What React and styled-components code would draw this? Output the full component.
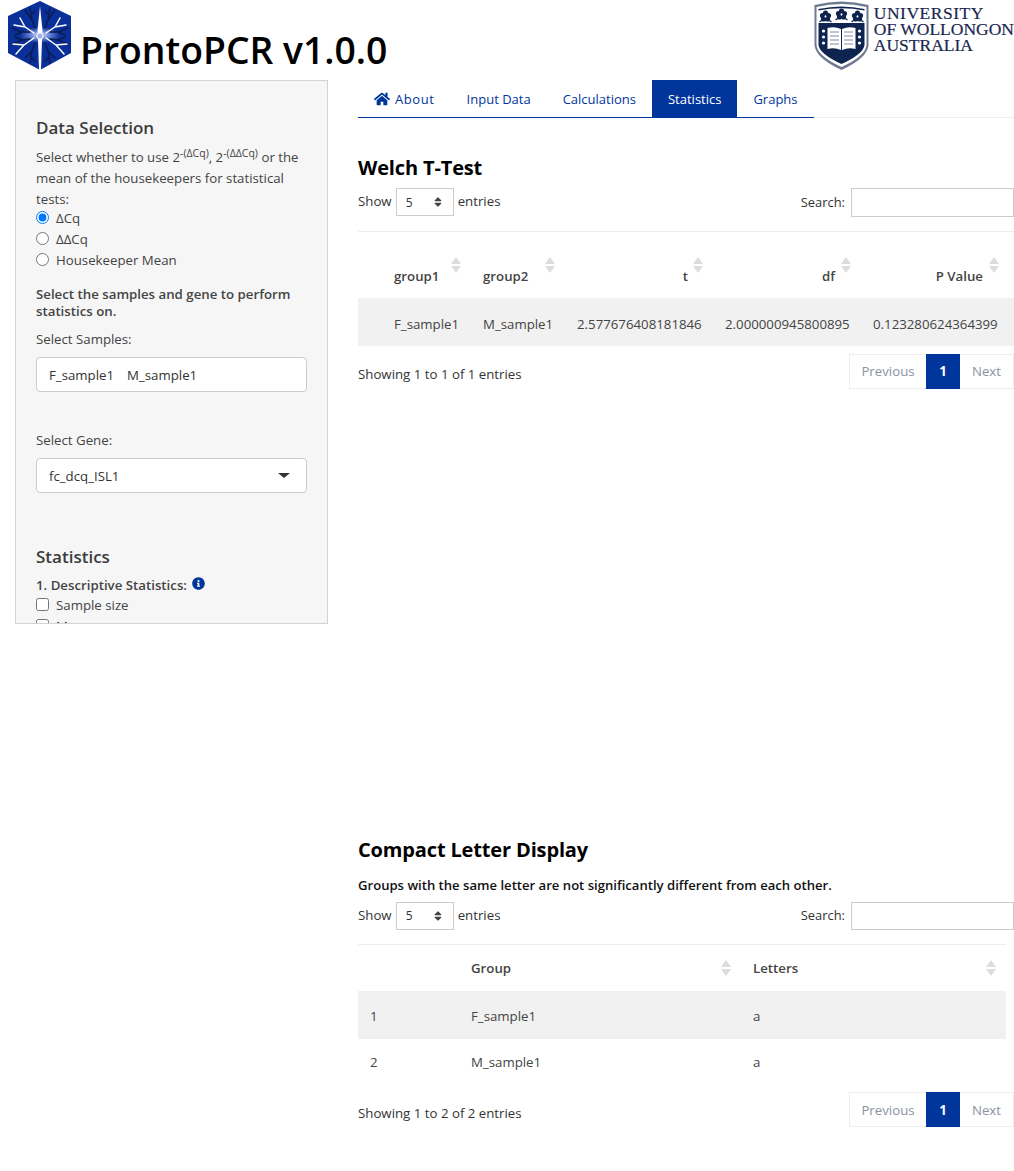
import React from "react"
import styled, { createGlobalStyle } from "styled-components"
import { FaHome, FaInfoCircle, FaSort } from "react-icons/fa"

const BLUE = "#00359c"
const FONT = `"Open Sans", "Noto Sans", sans-serif`

const GlobalStyle = createGlobalStyle`
  html, body {
    margin: 0;
    padding: 0;
    background: #fff;
    font-family: ${FONT};
    font-size: 13.25px;
    color: #444;
  }
  * { box-sizing: border-box; }
`

const Page = styled.div`
  width: 1014px;
  height: 1171px;
  overflow: hidden;
`

const Header = styled.header`
  display: flex;
  align-items: flex-start;
  height: 80px;
  padding-left: 8px;
`

const Title = styled.h1`
  margin: 27px 0 0 8px;
  font-size: 37.3px;
  line-height: 45px;
  font-weight: 600;
  color: #000;
  flex: 1;
`

const UowLogo = styled.div`
  display: flex;
  align-items: flex-start;
  gap: 5px;
  padding-top: 1px;
`

const UowText = styled.div`
  display: flex;
  flex-direction: column;
  padding-top: 4px;
  font-family: "Liberation Serif", serif;
  font-size: 17.5px;
  line-height: 16px;
  color: #1a2750;
  -webkit-text-stroke: 0.2px #1a2750;
  white-space: nowrap;
`

const UowLine = styled.span`
  letter-spacing: ${({ $spacing }) => $spacing ?? 0}px;
`

const Columns = styled.div`
  display: flex;
  align-items: flex-start;
  padding-left: 15px;
`

const Sidebar = styled.aside`
  flex: 0 0 313px;
  height: 544px;
  overflow: hidden;
  padding: 37px 20px 0;
  background: #f6f6f6;
  border: 1px solid #d4d4d4;
`

const SideHeading = styled.h3`
  margin: 0 0 9px;
  font-size: 17px;
  line-height: 20px;
  font-weight: 600;
  color: #3c3c3c;
`

const Para = styled.div`
  margin-bottom: -3px;
  line-height: 21px;
  sup { font-size: 10.5px; line-height: 0; }
`

const OptionRow = styled.label`
  display: flex;
  align-items: center;
  height: 21px;
  gap: 7px;
  input { margin: 0; width: 13px; height: 13px; }
`

const BoldPara = styled.div`
  margin-top: 16px;
  font-weight: 600;
  line-height: 17px;
`

const FieldLabel = styled.div`
  margin-top: ${({ $top }) => $top}px;
  line-height: 21px;
`

const FieldBox = styled.div`
  position: relative;
  display: flex;
  align-items: center;
  gap: 13px;
  height: 35px;
  margin-top: 7px;
  padding: 0 12px;
  background: #fff;
  border: 1px solid #ccc;
  border-radius: 4px;
  color: #333;
`

const Caret = styled.span`
  position: absolute;
  right: 16px;
  top: 14px;
  border: 5px solid transparent;
  border-top-color: #333;
  border-bottom: 0;
  border-left-width: 6px;
  border-right-width: 6px;
`

const StatHeading = styled(SideHeading)`
  margin: 54px 0 8px;
`

const StatLabel = styled.div`
  display: flex;
  align-items: center;
  gap: 5px;
  height: 19px;
  font-weight: 600;
  svg { color: ${BLUE}; font-size: 13px; margin-top: -2px; }
`

const Main = styled.main`
  flex: 0 0 656px;
  margin-left: 30px;
`

const TabBar = styled.nav`
  display: flex;
  height: 38px;
  border-bottom: 1px solid #eee;
`

const TabList = styled.div`
  display: flex;
  height: 38px;
  border-bottom: 1px solid ${BLUE};
`

const Tab = styled.a`
  display: flex;
  align-items: center;
  gap: 5px;
  height: 37px;
  padding: 0 16px;
  font-size: 13px;
  letter-spacing: ${({ $spacing }) => $spacing ?? 0}px;
  color: ${({ $active }) => ($active ? "#fff" : BLUE)};
  background: ${({ $active }) => ($active ? BLUE : "transparent")};
  svg { font-size: 16px; }
`

const Section = styled.section`
  margin-top: ${({ $top }) => $top}px;
`

const SectionTitle = styled.h3`
  margin: 0;
  font-size: 20px;
  line-height: 26px;
  font-weight: 700;
  letter-spacing: -0.15px;
  color: #000;
`

const Note = styled.p`
  margin: 13px 0 0;
  font-size: 13.1px;
  line-height: 18px;
  font-weight: 600;
  color: #111;
`

const Controls = styled.div`
  display: flex;
  justify-content: space-between;
  align-items: flex-start;
  margin-top: ${({ $top }) => $top}px;
  height: 29px;
  color: #333;
`

const ShowGroup = styled.div`
  display: flex;
  align-items: center;
  gap: 4px;
  height: 28px;
`

const ControlText = styled.span`
  margin-bottom: 2px;
`

const EntrySelect = styled.div`
  display: flex;
  align-items: center;
  justify-content: space-between;
  width: 58px;
  height: 28px;
  padding: 0 9px;
  border: 1px solid #ccc;
  font-size: 12px;
  svg { font-size: 12px; color: #444; }
`

const SearchGroup = styled.div`
  display: flex;
  align-items: center;
  gap: 6px;
  font-size: 12.9px;
`

const SearchInput = styled.input`
  width: 163px;
  height: ${({ $h }) => $h}px;
  border: 1px solid #ccc;
  background: #fff;
  padding: 0 4px;
`

const Table = styled.table`
  table-layout: fixed;
  width: ${({ $width }) => $width}px;
  border-collapse: collapse;
  border-top: 1px solid #eee;
  margin-top: ${({ $top }) => $top}px;
`

const Col = styled.col`
  width: ${({ $w }) => $w}px;
`

const Th = styled.th`
  position: relative;
  height: ${({ $h }) => $h}px;
  padding: ${({ $pad }) => $pad ?? "0 26px 0 12px"};
  text-align: ${({ $right }) => ($right ? "right" : "left")};
  font-weight: 600;
  color: #444;
  vertical-align: middle;
`

const Td = styled.td`
  height: ${({ $h }) => $h}px;
  padding: ${({ $pad }) => $pad ?? "0 12px"};
  text-align: ${({ $right }) => ($right ? "right" : "left")};
  white-space: nowrap;
  color: #444;
`

const Row = styled.tr`
  background: ${({ $shade }) => ($shade ? "#f1f1f1" : "transparent")};
`

const Sort = styled.span`
  position: absolute;
  right: ${({ $right }) => $right ?? 10}px;
  top: ${({ $top }) => $top}px;
  display: flex;
  flex-direction: column;
  gap: 2px;
  &::before, &::after {
    content: "";
    border-left: 5px solid transparent;
    border-right: 5px solid transparent;
  }
  &::before { border-bottom: 7px solid #ddd; }
  &::after { border-top: 7px solid #ddd; }
`

const Footer = styled.div`
  display: flex;
  justify-content: space-between;
  align-items: flex-start;
  margin-top: ${({ $top }) => $top}px;
  color: #333;
`

const FooterInfo = styled.div`
  margin-top: ${({ $top }) => $top}px;
  line-height: 21px;
`

const Pager = styled.div`
  display: flex;
  height: 35px;
  border: 1px solid #eee;
`

const PageItem = styled.span`
  display: flex;
  align-items: center;
  justify-content: center;
  width: ${({ $w }) => $w}px;
  margin: ${({ $active }) => ($active ? "-1px 0" : "0")};
  color: ${({ $active }) => ($active ? "#fff" : "#8a93a2")};
  background: ${({ $active }) => ($active ? BLUE : "transparent")};
  font-weight: ${({ $active }) => ($active ? 700 : 400)};
`

const Spacer = styled.div`
  height: ${({ $h }) => $h}px;
`

const NeuronLogo = () => (
  <svg width="64" height="70" viewBox="0 0 64 70">
    <defs>
      <radialGradient id="glow" cx="50%" cy="50%" r="50%">
        <stop offset="0" stopColor="#e8edf9" />
        <stop offset="0.45" stopColor="#6f8bd6" />
        <stop offset="1" stopColor="#0a2f98" />
      </radialGradient>
    </defs>
    <polygon points="32,1 63,16 63,53 32,70 0,53 0,16" fill="#0a2f98" />
    <ellipse cx="32" cy="35" rx="20" ry="8" fill="url(#glow)" />
    <g stroke="#0a1b4d" strokeWidth="1.4" fill="none" strokeLinecap="round">
      <path d="M27 28 L24 20 L22 8 M24 20 L17 10 M23 15 L27 11 M37 28 L40 20 L42 8 M40 20 L47 10 M41 15 L37 11" />
      <path d="M27 43 L24 51 L22 63 M24 51 L17 58 M23 57 L27 61 M37 43 L40 51 L42 63 M40 51 L47 58 M41 57 L37 61" />
      <path d="M22 32 L14 32 L4 28 M14 32 L7 35 M22 39 L14 40 L4 44 M14 40 L7 37 M42 32 L50 32 L60 28 M50 32 L57 35 M42 39 L50 40 L60 44 M50 40 L57 37" />
    </g>
    <g stroke="#fff" fill="none" strokeLinecap="round" strokeWidth="1.5">
      <path d="M26 33 L17 27 L6 25 M17 27 L12 18 M26 38 L16 45 L5 44 M16 45 L8 54" />
      <path d="M38 33 L47 27 L58 25 M47 27 L52 18 M38 38 L48 45 L59 44 M48 45 L56 54" />
    </g>
    <path d="M32 6 L34.5 30 L34 40 L33 70 L31 70 L30 40 L29.5 30 Z" fill="#fff" />
    <circle cx="32" cy="36" r="3.2" fill="#9fb2e6" stroke="#fff" strokeWidth="1" />
  </svg>
)

const Flower = ({ x, y }) => (
  <g transform={`translate(${x} ${y})`} fill="#0f2350">
    <circle cx="0" cy="-3" r="2.6" />
    <circle cx="3" cy="-0.5" r="2.6" />
    <circle cx="-3" cy="-0.5" r="2.6" />
    <circle cx="2" cy="3" r="2.6" />
    <circle cx="-2" cy="3" r="2.6" />
    <path d="M-6 6 L-2 3 M6 6 L2 3" stroke="#0f2350" strokeWidth="1.2" />
    <circle cx="0" cy="0.5" r="1" fill="#fff" />
  </g>
)

const ShieldLogo = () => (
  <svg width="55" height="69" viewBox="0 0 54 69">
    <path d="M0 4 Q27 -3 54 4 L54 44 Q53 57 27 69 Q1 57 0 44 Z" fill="#6f7990" />
    <path d="M2 6 Q27 0 52 6 L52 44 Q51 55 27 66 Q3 55 2 44 Z" fill="#fff" />
    <path d="M4 22 L50 22 L50 44 Q49 53 27 63 Q5 53 4 44 Z" fill="#0f2350" />
    <path d="M4 8 Q27 3 50 8 L50 9.5 Q27 5 4 9.5 Z" fill="#0f2350" />
    <Flower x={11} y={15} />
    <Flower x={27} y={13} />
    <Flower x={43} y={15} />
    <path d="M13 27 Q20 25 26.5 28 L26.5 49 Q20 46 13 48 Z M27.5 28 Q34 25 41 27 L41 48 Q34 46 27.5 49 Z" fill="#fff" />
    <path d="M15.5 31 H24.5 M15.5 35 H24.5 M15.5 39 H24.5 M15.5 43 H24.5 M29.5 31 H38.5 M29.5 35 H38.5 M29.5 39 H38.5 M29.5 43 H38.5" stroke="#7f8aa3" strokeWidth="1" />
    <g fill="#fff">
      <circle cx="9" cy="30" r="1.6" />
      <circle cx="9" cy="36" r="1.6" />
      <circle cx="9" cy="42" r="1.6" />
      <circle cx="45" cy="30" r="1.6" />
      <circle cx="45" cy="36" r="1.6" />
      <circle cx="45" cy="42" r="1.6" />
    </g>
  </svg>
)

const TableControls = ({ top, inputHeight }) => (
  <Controls $top={top}>
    <ShowGroup>
      <ControlText>Show</ControlText>
      <EntrySelect>
        5
        <FaSort />
      </EntrySelect>
      <ControlText>entries</ControlText>
    </ShowGroup>
    <SearchGroup>
      <ControlText>Search:</ControlText>
      <SearchInput type="search" $h={inputHeight} />
    </SearchGroup>
  </Controls>
)

const TableFooter = ({ text, top, infoTop }) => (
  <Footer $top={top}>
    <FooterInfo $top={infoTop}>{text}</FooterInfo>
    <Pager>
      <PageItem $w={76}>Previous</PageItem>
      <PageItem $w={34} $active>1</PageItem>
      <PageItem $w={53}>Next</PageItem>
    </Pager>
  </Footer>
)

const welchHead = [
  { label: "group1", pad: "22px 26px 0 36px" },
  { label: "group2", pad: "22px 26px 0 12px" },
  { label: "t", pad: "22px 25px 0 12px", right: true },
  { label: "df", pad: "22px 26px 0 12px", right: true },
  { label: "P Value", pad: "22px 31px 0 12px", right: true, sortRight: 15 },
]

const welchRow = [
  { value: "F_sample1", pad: "4px 12px 0 36px" },
  { value: "M_sample1", pad: "4px 12px 0" },
  { value: "2.577676408181846", pad: "4px 12px 0", right: true },
  { value: "2.000000945800895", pad: "4px 12px 0", right: true },
  { value: "0.123280624364399", pad: "4px 17px 0 12px", right: true },
]

const App = () => {
  return (
    <Page>
      <GlobalStyle />
      <Header>
        <NeuronLogo />
        <Title>ProntoPCR v1.0.0</Title>
        <UowLogo>
          <ShieldLogo />
          <UowText>
            <UowLine $spacing={0.5}>UNIVERSITY</UowLine>
            <UowLine>OF WOLLONGON</UowLine>
            <UowLine>AUSTRALIA</UowLine>
          </UowText>
        </UowLogo>
      </Header>
      <Columns>
        <Sidebar>
          <SideHeading>Data Selection</SideHeading>
          <Para>
            Select whether to use 2<sup>-(ΔCq)</sup>, 2<sup>-(ΔΔCq)</sup> or the mean of the housekeepers for statistical tests:
          </Para>
          <OptionRow><input type="radio" name="mode" defaultChecked />ΔCq</OptionRow>
          <OptionRow><input type="radio" name="mode" />ΔΔCq</OptionRow>
          <OptionRow><input type="radio" name="mode" />Housekeeper Mean</OptionRow>
          <BoldPara>Select the samples and gene to perform statistics on.</BoldPara>
          <FieldLabel $top={9}>Select Samples:</FieldLabel>
          <FieldBox>
            <span>F_sample1</span>
            <span>M_sample1</span>
          </FieldBox>
          <FieldLabel $top={38}>Select Gene:</FieldLabel>
          <FieldBox>
            <span>fc_dcq_ISL1</span>
            <Caret />
          </FieldBox>
          <StatHeading>Statistics</StatHeading>
          <StatLabel>1. Descriptive Statistics: <FaInfoCircle /></StatLabel>
          <OptionRow><input type="checkbox" />Sample size</OptionRow>
          <OptionRow><input type="checkbox" />Mean</OptionRow>
        </Sidebar>
        <Main>
          <TabBar>
            <TabList>
              <Tab $spacing={0.6}><FaHome />About</Tab>
              <Tab>Input Data</Tab>
              <Tab>Calculations</Tab>
              <Tab $active>Statistics</Tab>
              <Tab>Graphs</Tab>
            </TabList>
          </TabBar>
          <Section $top={37}>
            <SectionTitle>Welch T-Test</SectionTitle>
            <TableControls top={7} inputHeight={29} />
            <Table $width={656} $top={14}>
              <colgroup>
                <Col $w={113} />
                <Col $w={94} />
                <Col $w={148} />
                <Col $w={148} />
                <Col $w={153} />
              </colgroup>
              <thead>
                <tr>
                  {welchHead.map((h) => (
                    <Th key={h.label} $h={66} $pad={h.pad} $right={h.right}>
                      {h.label}
                      <Sort $top={25} $right={h.sortRight} />
                    </Th>
                  ))}
                </tr>
              </thead>
              <tbody>
                <Row $shade>
                  {welchRow.map((c) => (
                    <Td key={c.value} $h={48} $pad={c.pad} $right={c.right}>{c.value}</Td>
                  ))}
                </Row>
              </tbody>
            </Table>
            <TableFooter text="Showing 1 to 1 of 1 entries" top={8} infoTop={10} />
          </Section>
          <Spacer $h={448} />
          <Section $top={0}>
            <SectionTitle>Compact Letter Display</SectionTitle>
            <Note>Groups with the same letter are not significantly different from each other.</Note>
            <TableControls top={8} inputHeight={28} />
            <Table $width={648} $top={13}>
              <colgroup>
                <Col $w={101} />
                <Col $w={282} />
                <Col $w={265} />
              </colgroup>
              <thead>
                <tr>
                  <Th $h={47} />
                  <Th $h={47}>Group<Sort $top={15} /></Th>
                  <Th $h={47}>Letters<Sort $top={15} /></Th>
                </tr>
              </thead>
              <tbody>
                <Row $shade>
                  <Td $h={48} $pad="2px 12px 0">1</Td>
                  <Td $h={48} $pad="2px 12px 0">F_sample1</Td>
                  <Td $h={48} $pad="2px 12px 0">a</Td>
                </Row>
                <Row>
                  <Td $h={46}>2</Td>
                  <Td $h={46}>M_sample1</Td>
                  <Td $h={46}>a</Td>
                </Row>
              </tbody>
            </Table>
            <TableFooter text="Showing 1 to 2 of 2 entries" top={7} infoTop={11} />
          </Section>
        </Main>
      </Columns>
    </Page>
  )
}

export default App
